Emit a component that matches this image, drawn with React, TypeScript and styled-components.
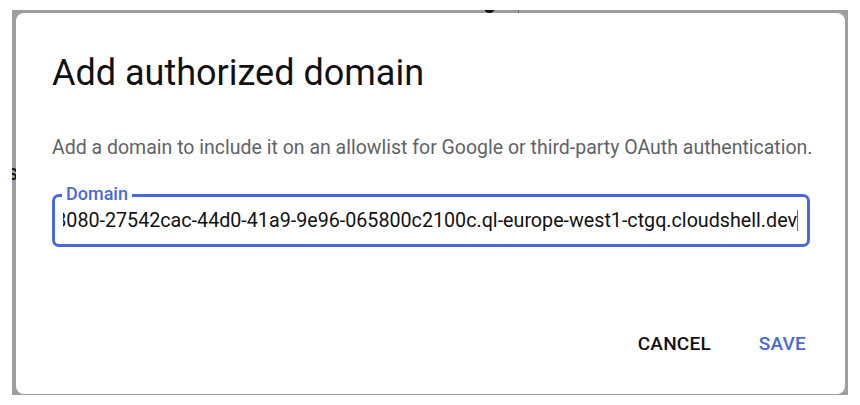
import styled, { createGlobalStyle } from 'styled-components';

const GlobalStyle = createGlobalStyle`
    html, body {
        margin: 0;
        padding: 0;
        background: #ffffff;
        font-family: Roboto, "Noto Sans", sans-serif;
    }
`;

const DOMAIN = '8080-27542cac-44d0-41a9-9e96-065800c2100c.ql-europe-west1-ctgq.cloudshell.dev';

const App: React.FC = () => {
    return (
        <>
            <GlobalStyle />
            <Page>
                <Backdrop>
                    {/* bits of the page under the scrim, peeking round the dialog */}
                    <PeekLetter>s</PeekLetter>
                    <PeekBlob />
                    <PeekTick />

                    <Dialog role="dialog" aria-labelledby="dialog-title">
                        <Title id="dialog-title">Add authorized domain</Title>
                        <Description>
                            Add a domain to include it on an allowlist for Google or third-party OAuth authentication.
                        </Description>

                        <Field>
                            <FieldLabel>Domain</FieldLabel>
                            <FieldValue>
                                <ValueText>{ DOMAIN }</ValueText>
                                <Caret />
                            </FieldValue>
                        </Field>

                        <Actions>
                            <TextButton>Cancel</TextButton>
                            <TextButton $primary>Save</TextButton>
                        </Actions>
                    </Dialog>
                </Backdrop>
            </Page>
        </>
    );
};

const Page = styled.div`
    width: 860px;
    height: 405px;
    padding: 10px 12px 0 12px;
    box-sizing: border-box;
    overflow: hidden;
`;

const Backdrop = styled.div`
    position: relative;
    width: 836px;
    height: 385px;
    background: #9e9e9e;
    padding: 3px 3px 1px 4px;
    box-sizing: border-box;
    display: flex;
    overflow: hidden;
`;

const PeekLetter = styled.span`
    position: absolute;
    left: -5px;
    top: 150px;
    font-size: 22px;
    font-weight: 500;
    line-height: 26px;
    color: #1a1a1a;
`;

const PeekBlob = styled.span`
    position: absolute;
    left: 472px;
    top: -4px;
    width: 11px;
    height: 7px;
    border-radius: 0 0 6px 6px;
    background: #111111;
`;

const PeekTick = styled.span`
    position: absolute;
    left: 506px;
    top: 0;
    width: 1px;
    height: 3px;
    background: #6e6e6e;
`;

const Dialog = styled.div`
    position: relative;
    flex: 1;
    min-width: 0;
    background: #ffffff;
    border-radius: 8px;
    padding: 39px 35px 0 36px;
    box-sizing: border-box;
    display: flex;
    flex-direction: column;
`;

const Title = styled.h2`
    margin: 0;
    font-size: 36px;
    line-height: 42px;
    font-weight: 400;
    color: #111111;
`;

const Description = styled.p`
    margin: 42px 0 0 0;
    font-size: 19.5px;
    line-height: 24px;
    color: #5f6368;
    white-space: nowrap;
`;

const Field = styled.div`
    position: relative;
    margin-top: 34px;
    height: 53px;
    border: 3px solid #4a69d8;
    border-radius: 7px;
    box-sizing: border-box;
    display: flex;
    align-items: center;
    padding: 0 9px 0 8px;
    min-width: 0;
`;

const FieldLabel = styled.span`
    position: absolute;
    left: 7px;
    top: -14px;
    padding: 0 4px;
    background: #ffffff;
    color: #4a69d8;
    font-size: 18px;
    font-weight: 500;
    line-height: 22px;
`;

const FieldValue = styled.div`
    flex: 1;
    min-width: 0;
    display: flex;
    justify-content: flex-end;
    align-items: center;
    overflow: hidden;
`;

const ValueText = styled.span`
    flex-shrink: 0;
    font-size: 19.7px;
    line-height: 26px;
    color: #111111;
    white-space: nowrap;
`;

const Caret = styled.span`
    flex-shrink: 0;
    width: 1px;
    height: 21px;
    background: #4a69d8;
`;

const Actions = styled.div`
    margin-top: auto;
    margin-bottom: 33px;
    display: flex;
    justify-content: flex-end;
    gap: 40px;
`;

const TextButton = styled.button<{ $primary?: boolean }>`
    border: none;
    background: transparent;
    padding: 6px 4px;
    font-family: Roboto, "Noto Sans", sans-serif;
    font-size: 19px;
    font-weight: 500;
    text-transform: uppercase;
    letter-spacing: 0.2px;
    color: ${ ({ $primary }) => $primary ? '#4a69d8' : '#111111' };
    cursor: pointer;
`;

export default App;
